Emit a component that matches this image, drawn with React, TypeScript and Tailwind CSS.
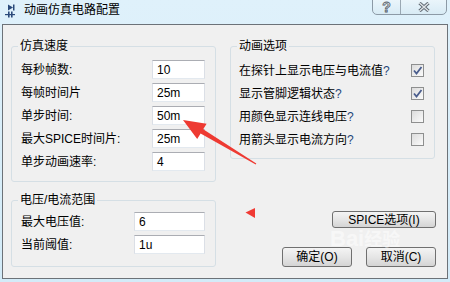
import type { ReactNode } from 'react'

const font = "font-['Liberation_Sans','Noto_Sans_CJK_SC',sans-serif]"

function TextBox({ value, width }: { value: string; width: string }) {
  return (
    <div
      className={`${width} h-[19px] bg-white border border-[#dbdfe6] border-t-[#abadb3] border-b-[#e3e9ef] flex items-center pl-[4px] text-[12px] text-black`}
    >
      {value}
    </div>
  )
}

function CheckBox({ checked }: { checked: boolean }) {
  return (
    <div className="w-[13px] h-[13px] border border-[#8e8f8f] bg-gradient-to-br from-[#dcdcdc] to-[#fbfbfb] flex items-center justify-center">
      {checked && (
        <svg width="11" height="11" viewBox="0 0 11 11">
          <path d="M2 5.5 L4.5 8.5 L9.5 2" fill="none" stroke="#4a5d8d" strokeWidth="1.8" />
        </svg>
      )}
    </div>
  )
}

function Group({ title, className, children }: { title: string; className: string; children: ReactNode }) {
  return (
    <div className={`border border-[#d5dfe5] rounded-[3px] flex flex-col ${className}`}>
      <span className="-mt-[8px] ml-[6px] px-[2px] w-fit bg-[#f0f0f0] leading-[14px] text-[12px] text-black">
        {title}
      </span>
      {children}
    </div>
  )
}

function Button({ label, className }: { label: string; className: string }) {
  return (
    <button
      type="button"
      className={`border border-[#707070] rounded-[3px] bg-gradient-to-b from-[#f4f4f4] via-[#e6e6e6] to-[#d4d4d4] text-[12px] text-black leading-none flex items-center justify-center ${className}`}
    >
      {label}
    </button>
  )
}

const speedRows = [
  ['每秒帧数:', '10'],
  ['每帧时间片', '25m'],
  ['单步时间:', '50m'],
  ['最大SPICE时间片:', '25m'],
  ['单步动画速率:', '4'],
]

const rangeRows = [
  ['最大电压值:', '6'],
  ['当前阈值:', '1u'],
]

const options: [string, boolean][] = [
  ['在探针上显示电压与电流值', true],
  ['显示管脚逻辑状态', true],
  ['用颜色显示连线电压', false],
  ['用箭头显示电流方向', false],
]

export default function App() {
  return (
    <div className={`relative w-[450px] h-[282px] bg-gradient-to-b from-[#dff1fb] to-[#d3ebf8] flex flex-col overflow-hidden ${font}`}>
      {/* title bar */}
      <div className="h-[24px] flex items-start">
        <svg className="ml-[5px] mt-[4px]" width="10" height="14" viewBox="0 0 10 14">
          <path d="M3 0.5 L8 3.5 L3 6.5 Z" fill="#2b4a7a" />
          <rect x="8" y="0.5" width="1.5" height="6" fill="#2b4a7a" />
          <rect x="0" y="10" width="10" height="1.2" fill="#2b4a7a" />
          <rect x="3" y="7.5" width="1.6" height="6" fill="#2b4a7a" />
          <rect x="6" y="7.5" width="1.6" height="6" fill="#2b4a7a" />
        </svg>
        <span className="ml-[9px] mt-[3px] text-[12px] leading-[14px] text-black">动画仿真电路配置</span>
        <div className="ml-auto mr-[3px] -mt-[1px] w-[75px] h-[16px] border border-[#8c9aa6] rounded-b-[5px] bg-gradient-to-b from-[#eaf5fb] to-[#d8ebf5] flex">
          <div className="w-[28px] border-r border-[#9aa8b3] flex items-center justify-center text-[14px] leading-none font-bold text-[#d8dde2] [-webkit-text-stroke:0.8px_#56606a]">
            ?
          </div>
          <div className="flex-1 flex items-center justify-center">
            <svg width="12" height="10" viewBox="0 0 12 10">
              <path d="M1.5 1 L10.5 9 M10.5 1 L1.5 9" stroke="#56606a" strokeWidth="3.2" />
              <path d="M1.5 1 L10.5 9 M10.5 1 L1.5 9" stroke="#dde2e6" strokeWidth="1.6" />
            </svg>
          </div>
        </div>
      </div>

      {/* client area */}
      <div className="mx-[2px] h-[255px] border border-[#6c7278] bg-[#f0f0f0] flex gap-[14px] pl-[8px] pt-[21px]">
        <div className="w-[205px] flex flex-col">
          <Group title="仿真速度" className="h-[136px]">
            <div className="mt-[5px] flex flex-col pl-[9px] pr-[10px]">
              {speedRows.map(([label, value]) => (
                <div key={label} className="h-[23px] flex items-center justify-between text-[12px] text-black">
                  <span>{label}</span>
                  <TextBox value={value} width="w-[53px]" />
                </div>
              ))}
            </div>
          </Group>
          <Group title="电压/电流范围" className="mt-[18px] h-[67px]">
            <div className="mt-[3px] flex flex-col pl-[9px] pr-[10px]">
              {rangeRows.map(([label, value]) => (
                <div key={label} className="h-[23px] flex items-center justify-between text-[12px] text-black">
                  <span>{label}</span>
                  <TextBox value={value} width="w-[71px]" />
                </div>
              ))}
            </div>
          </Group>
        </div>

        <div className="w-[206px] flex flex-col">
          <Group title="动画选项" className="w-[205px] h-[113px]">
            <div className="mt-[6px] flex flex-col pl-[8px] pr-[10px]">
              {options.map(([label, checked]) => (
                <div key={label} className="h-[23px] flex items-center justify-between text-[12px] text-black">
                  <span>
                    {label}
                    <span className="text-[#24467a]">?</span>
                  </span>
                  <CheckBox checked={checked} />
                </div>
              ))}
            </div>
          </Group>
          <Button label="SPICE选项(I)" className="self-end mt-[52px] w-[104px] h-[17px]" />
          <div className="mt-[19px] flex justify-end gap-[14px]">
            <Button label="确定(O)" className="w-[70px] h-[20px]" />
            <Button label="取消(C)" className="w-[70px] h-[20px]" />
          </div>
        </div>
      </div>

      {/* annotations */}
      <svg className="absolute left-0 top-0 pointer-events-none" width="450" height="282" viewBox="0 0 450 282">
        <polygon
          points="183,120 206.6,123.7 203.2,129.3 256.3,163.6 255.7,164.4 200.6,133.5 197.2,139.1"
          fill="#ee3a32"
        />
        <polygon points="245.5,212.5 255,208 255,218" fill="#f03a34" />
      </svg>
      <div className="absolute left-[330px] top-[228px] pointer-events-none text-white/50 text-[22px] font-bold leading-none">
        Bai<span className="text-[18px]">经验</span>
      </div>
    </div>
  )
}
